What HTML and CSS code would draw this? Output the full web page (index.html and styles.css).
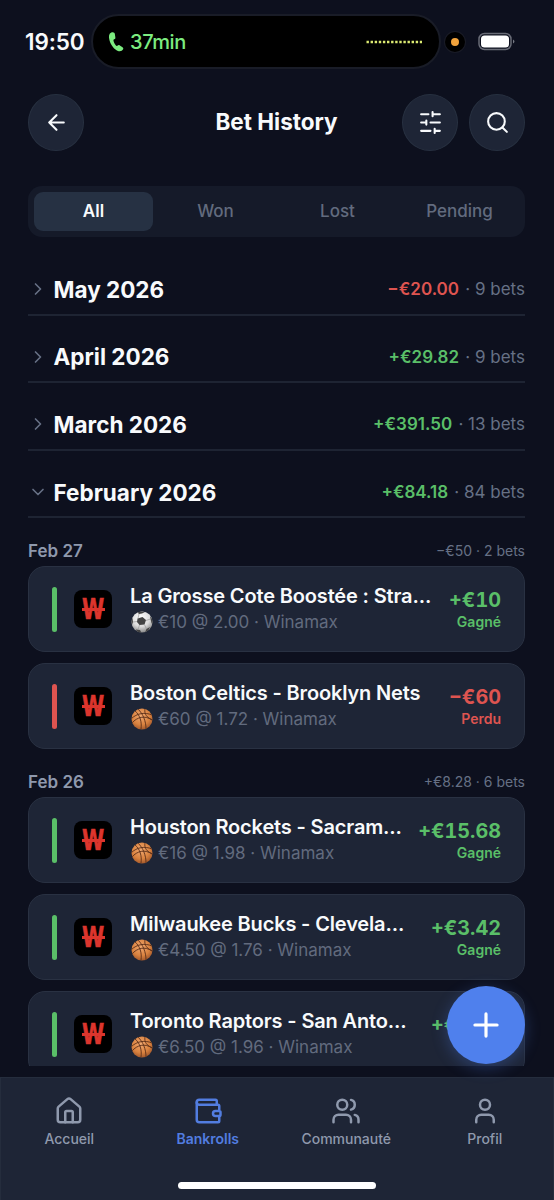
FILE: index.html
```html
<!DOCTYPE html>
<html lang="fr">
<head>
<meta charset="utf-8">
<title>Bet History</title>
<link rel="stylesheet" href="styles.css">
</head>
<body>
<svg class="defs" aria-hidden="true">
  <defs>
    <radialGradient id="leather" cx=".45" cy=".35" r=".65"><stop offset="0" stop-color="#f0a870"/><stop offset=".65" stop-color="#d9823f"/><stop offset="1" stop-color="#a55a2c"/></radialGradient>
    <radialGradient id="white" cx=".45" cy=".3" r=".7"><stop offset="0" stop-color="#fff"/><stop offset=".6" stop-color="#dcdcdc"/><stop offset="1" stop-color="#8b8b8b"/></radialGradient>
    <clipPath id="ball"><circle cx="11" cy="11" r="10.5"/></clipPath>
  </defs>
  <symbol id="basket" viewBox="0 0 22 22">
    <circle cx="11" cy="11" r="10.5" fill="url(#leather)"/>
    <g clip-path="url(#ball)" fill="none" stroke="#5a2f1a" stroke-width=".9"><path d="M0 11C6 5 14 4 21 7M7 1c5 5 8 12 8 20M4 3c5 4 7 11 6 18M1 15c5-6 13-8 20-3M14 1c-1 5 2 9 8 11"/></g>
  </symbol>
  <symbol id="soccer" viewBox="0 0 22 22">
    <circle cx="11" cy="11" r="10.5" fill="url(#white)"/>
    <g clip-path="url(#ball)"><g fill="#444"><path d="M6.500 7.500l5-1.500 3.500 3-1.500 4.500-5 .5-2.500-3z"/><path d="M6 1l4-1 4 1-3 1.500-3 .5zM0 8l1.500-1 .5 4-1 3L0 14zM19 5l3 4v5l-1.500-2-1-4zM5 18.500l4 .5 1.500 3H6zM15.500 18l3.500-2-2 4-3 1.500z"/></g><path d="M8 3L7 7.500M2 11l4-.5M15 9.500l4.500-1.500M13.500 13.500l2 4.500M8.500 14L7 18.500" stroke="#999" stroke-width=".7"/></g>
  </symbol>
  <symbol id="right" viewBox="0 0 24 24"><path d="m9 18 6-6-6-6"/></symbol>
  <symbol id="down" viewBox="0 0 24 24"><path d="m6 9 6 6 6-6"/></symbol>
</svg>

<div class="phone">
  <div class="status">
    <span class="clock">19:50</span>
    <div class="island">
      <svg class="call" viewBox="0 0 18 22"><path d="M3.500 1C1 2 .5 5 1.500 9c1.500 5.500 5 10 9 11.500 2.500.9 4.500 0 5.500-1.700.6-1-.1-1.800-1-2.500l-2.500-1.700c-1-.6-1.800-.3-2.600.4-.6.500-1 .4-1.500-.2C7 13 6 11 5.800 9.500c-.1-.7.1-1 .8-1.300 1-.4 1.300-1 1.200-2L7.300 2.700C7.100 1 5.500.2 3.500 1z"/></svg>
      <span class="duration">37min</span>
      <svg class="wave" viewBox="0 0 56 4"><path d="M.5 2H56"/></svg>
    </div>
    <span class="mic"></span>
    <svg class="battery" viewBox="0 0 38 20"><rect x="1" y="1.500" width="32" height="16" rx="5.500" fill="none" stroke="#686b76" stroke-width="1.500"/><rect x="3" y="3.500" width="28" height="12" rx="3.500" fill="#fff"/><path d="M35 7.500q3 2 0 4z" fill="#777a84"/></svg>
  </div>

  <header class="header">
    <button class="round"><svg class="ic" viewBox="0 0 24 24"><path d="m12 19-7-7 7-7M19 12H5"/></svg></button>
    <h1>Bet History</h1>
    <div class="actions">
      <button class="round"><svg class="ic tune" viewBox="0 0 24 24"><path d="M21 4h-7M10 4H3M21 12h-9M8 12H3M21 20h-5M12 20H3M14 2v4M8 10v4M16 18v4"/></svg></button>
      <button class="round"><svg class="ic search" viewBox="0 0 24 24"><circle cx="11" cy="11" r="8"/><path d="m21 21-4.300-4.300"/></svg></button>
    </div>
  </header>

  <nav class="tabs"><span class="tab active">All</span><span class="tab">Won</span><span class="tab">Lost</span><span class="tab">Pending</span></nav>

  <main class="list">
    <section class="month"><svg class="chev"><use href="#right"/></svg><h2>May 2026</h2><p><b class="loss">−€20.00</b> · 9 bets</p></section>
    <section class="month"><svg class="chev"><use href="#right"/></svg><h2>April 2026</h2><p><b class="gain">+€29.82</b> · 9 bets</p></section>
    <section class="month"><svg class="chev"><use href="#right"/></svg><h2>March 2026</h2><p><b class="gain">+€391.50</b> · 13 bets</p></section>
    <section class="month"><svg class="chev"><use href="#down"/></svg><h2>February 2026</h2><p><b class="gain">+€84.18</b> · 84 bets</p></section>

    <div class="day"><h3>Feb 27</h3><span>−€50 · 2 bets</span></div>
    <article class="card gain"><i class="bar"></i><span class="brand"><b>W</b></span>
      <div class="info"><h4>La Grosse Cote Boostée : Stra...</h4><p><svg class="ball"><use href="#soccer"/></svg>€10 @ 2.00 · Winamax</p></div>
      <div class="result"><strong>+€10</strong><span>Gagné</span></div></article>
    <article class="card loss"><i class="bar"></i><span class="brand"><b>W</b></span>
      <div class="info"><h4>Boston Celtics - Brooklyn Nets</h4><p><svg class="ball"><use href="#basket"/></svg>€60 @ 1.72 · Winamax</p></div>
      <div class="result"><strong>−€60</strong><span>Perdu</span></div></article>

    <div class="day"><h3>Feb 26</h3><span>+€8.28 · 6 bets</span></div>
    <article class="card gain"><i class="bar"></i><span class="brand"><b>W</b></span>
      <div class="info"><h4>Houston Rockets - Sacram...</h4><p><svg class="ball"><use href="#basket"/></svg>€16 @ 1.98 · Winamax</p></div>
      <div class="result"><strong>+€15.68</strong><span>Gagné</span></div></article>
    <article class="card gain"><i class="bar"></i><span class="brand"><b>W</b></span>
      <div class="info"><h4>Milwaukee Bucks - Clevela...</h4><p><svg class="ball"><use href="#basket"/></svg>€4.50 @ 1.76 · Winamax</p></div>
      <div class="result"><strong>+€3.42</strong><span>Gagné</span></div></article>
    <article class="card gain"><i class="bar"></i><span class="brand"><b>W</b></span>
      <div class="info"><h4>Toronto Raptors - San Anto...</h4><p><svg class="ball"><use href="#basket"/></svg>€6.50 @ 1.96 · Winamax</p></div>
      <div class="result"><strong>+€6.24</strong><span>Gagné</span></div></article>
  </main>

  <button class="fab"><svg class="ic" viewBox="0 0 24 24"><path d="M5 12h14M12 5v14"/></svg></button>

  <footer class="bottom">
    <div class="links">
      <a class="link"><svg class="ic" viewBox="0 0 24 24"><path d="M15 21v-8a1 1 0 0 0-1-1h-4a1 1 0 0 0-1 1v8"/><path d="M3 10a2 2 0 0 1 .7-1.500l7-6a2 2 0 0 1 2.600 0l7 6A2 2 0 0 1 21 10v9a2 2 0 0 1-2 2H5a2 2 0 0 1-2-2z"/></svg>Accueil</a>
      <a class="link current"><svg class="ic" viewBox="0 0 24 24"><path d="M19 7V4a1 1 0 0 0-1-1H5a2 2 0 0 0 0 4h15a1 1 0 0 1 1 1v4h-3a2 2 0 0 0 0 4h3a1 1 0 0 0 1-1v-2a1 1 0 0 0-1-1"/><path d="M3 5v14a2 2 0 0 0 2 2h15a1 1 0 0 0 1-1v-4"/></svg>Bankrolls</a>
      <a class="link"><svg class="ic" viewBox="0 0 24 24"><path d="M16 21v-2a4 4 0 0 0-4-4H6a4 4 0 0 0-4 4v2"/><circle cx="9" cy="7" r="4"/><path d="M22 21v-2a4 4 0 0 0-3-3.870M16 3.130a4 4 0 0 1 0 7.750"/></svg>Communauté</a>
      <a class="link"><svg class="ic" viewBox="0 0 24 24"><path d="M19 21v-2a4 4 0 0 0-4-4H9a4 4 0 0 0-4 4v2"/><circle cx="12" cy="7" r="4"/></svg>Profil</a>
    </div>
    <div class="home"></div>
  </footer>
</div>
</body>
</html>
```

FILE: styles.css
```css
* { box-sizing: border-box; margin: 0; padding: 0; }
body { background: #0d101e; font-family: Inter, "Liberation Sans", sans-serif; color: #f8fafc; }
button { border: 0; font: inherit; color: inherit; }
.defs { position: absolute; width: 0; height: 0; }
.phone { width: 554px; height: 1200px; display: flex; flex-direction: column; overflow: hidden; position: relative; }
.ic { fill: none; stroke: currentColor; stroke-width: 2; stroke-linecap: round; stroke-linejoin: round; width: 26px; height: 26px; }

.status { height: 83px; flex: none; display: flex; align-items: center; padding: 0 37px 0 25px; }
.clock { width: 66px; font-size: 22.500px; font-weight: 600; letter-spacing: -.1px; white-space: nowrap; }
.island { width: 350px; height: 55px; border: 2px solid #191c27; border-radius: 28px; background: #000; display: flex; align-items: center; padding: 0 17px 0 15px; }
.call { width: 17px; height: 22px; fill: #7cec80; }
.duration { margin-left: 5px; flex: 1; font-size: 20px; font-weight: 500; letter-spacing: -.4px; color: #7cec80; }
.wave { width: 56px; height: 4px; stroke: #dcea72; stroke-width: 2.400; stroke-dasharray: 2.400 1.700; }
.mic { width: 20px; height: 20px; margin-left: 4px; border: 6px solid #000; border-radius: 50%; background: #f2a33c; box-shadow: 0 0 0 1px #191b26; }
.battery { width: 38px; height: 20px; margin-left: 13px; }

.header { height: 68px; flex: none; padding: 11px 29px 0 28px; display: grid; grid-template-columns: 1fr auto 1fr; align-items: start; }
.header h1 { font-size: 22.500px; line-height: 56px; font-weight: 700; }
.round { width: 56px; height: 57px; border-radius: 50%; background: #1e2536; border: 1px solid #273040; display: grid; place-items: center; }
.round .ic { width: 25px; height: 25px; }
.actions { display: flex; gap: 11px; justify-content: flex-end; }

.tabs { flex: none; height: 51px; margin: 35px 29px 0 28px; padding: 6px; border-radius: 14px; background: #151a29; display: grid; grid-template-columns: repeat(4, 1fr); column-gap: 3px; }
.tab { display: grid; place-items: center; font-size: 17px; font-weight: 500; color: #626b7e; border-radius: 9px; line-height: 1; }
.tab.active { background: #263143; color: #f8fafc; font-weight: 600; }

.list { flex: 1; min-height: 0; overflow: hidden; margin: 0 29px 0 28px; padding-top: 11px; }
.month { height: 67.600px; padding-top: 17px; display: flex; align-items: center; border-bottom: 2px solid #1e2433; }
.chev { width: 20px; height: 20px; margin-right: 5.500px; fill: none; stroke: #667085; stroke-width: 2; stroke-linecap: round; stroke-linejoin: round; }
.month h2 { flex: 1; font-size: 22.500px; line-height: 27px; font-weight: 700; }
.month p { font-size: 17px; color: #667085; }
.month b { font-weight: 600; margin-right: 1.500px; }
.gain { color: #5abf68; }
.loss { color: #de5450; }
.day { height: 48px; padding-top: 17px; display: flex; align-items: center; justify-content: space-between; color: #667085; font-size: 14px; }
.day h3 { font-size: 17px; font-weight: 600; color: #8f99ad; }
.card { height: 86px; margin-bottom: 11px; padding: 0 23px 0 22px; display: flex; align-items: center; border: 1px solid #293142; border-radius: 17px; background: #1e2536; }
.card:has(+ .day) { margin-bottom: 0; }
.bar { width: 5px; height: 45px; margin-left: 1px; border-radius: 3px; background: currentColor; }
.brand { position: relative; width: 38px; height: 38px; margin: 0 18px 0 17px; flex: none; border-radius: 8px; background: #000; color: #dc352d; font: 700 28px/40px "DejaVu Sans Condensed", sans-serif; text-align: center; }
.brand b { display: block; transform: scaleX(.8); -webkit-text-stroke: .5px #dc352d; }
.brand::after { content: ""; position: absolute; left: 7.500px; top: 18px; width: 23px; height: 3px; background: #dc352d; }
.info { flex: 1; min-width: 0; white-space: nowrap; }
.info h4 { font-size: 20px; line-height: 26px; font-weight: 600; letter-spacing: -.15px; color: #f8fafc; }
.info p { display: flex; align-items: center; font-size: 17px; line-height: 26px; color: #626b7e; }
.ball { width: 22px; height: 22px; margin: 0 5px 0 1px; }
.result { text-align: right; display: flex; flex-direction: column; padding-top: 2px; }
.result strong { font-size: 19.800px; line-height: 24px; font-weight: 700; font-variant-numeric: tabular-nums; }
.result span { font-size: 14px; line-height: 20px; font-weight: 600; }

.fab { position: absolute; left: 447px; top: 986px; width: 78px; height: 78px; border-radius: 50%; background: #4f80ed; color: #fff; display: grid; place-items: center; box-shadow: 0 4px 16px #4f80ed4d; }
.fab .ic { width: 38px; height: 38px; }

.bottom { flex: none; height: 123px; margin-top: 11px; background: #1e2536; border: 1px solid #252d3d; border-bottom: 0; }
.links { display: grid; grid-template-columns: repeat(4, 1fr); height: 107px; margin: 0 -1px; padding-top: 18px; align-items: start; }
.link { display: flex; flex-direction: column; align-items: center; gap: 3px; font-size: 14px; line-height: 20px; font-weight: 500; color: #8f99ad; }
.link .ic { width: 30px; height: 30px; }
.link.current { color: #527de0; font-weight: 600; }
.home { width: 198px; height: 7px; margin: -3px auto 0; border-radius: 4px; background: #fff; }
```
